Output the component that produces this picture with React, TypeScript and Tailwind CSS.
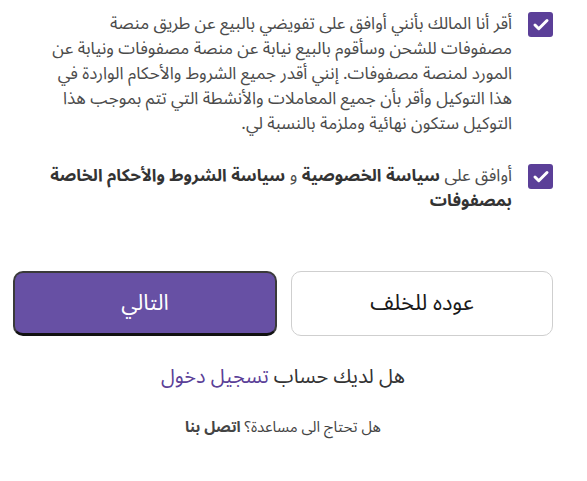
import { Check } from 'lucide-react'

function Box() {
  return (
    <span className="flex h-[25px] w-[25px] shrink-0 items-center justify-center rounded-[3px] bg-[#5b3f98]">
      <Check className="h-[18px] w-[18px] text-white" strokeWidth={4} />
    </span>
  )
}

export default function App() {
  return (
    <div
      dir="rtl"
      className="min-h-screen bg-white pr-[34px] pl-[13px] pt-[12px] text-[#4b4b4b]"
      style={{ fontFamily: '"Noto Sans Arabic", "DejaVu Sans", "Noto Sans", sans-serif' }}
    >
      <div className="flex items-start gap-[16px]">
        <Box />
        <p className="text-[17px] leading-[25px]">
          أقر أنا المالك بأنني أوافق على تفويضي بالبيع عن طريق منصة
          <br />
          مصفوفات للشحن وسأقوم بالبيع نيابة عن منصة مصفوفات ونيابة عن
          <br />
          المورد لمنصة مصفوفات. إنني أقدر جميع الشروط والأحكام الواردة في
          <br />
          هذا التوكيل وأقر بأن جميع المعاملات والأنشطة التي تتم بموجب هذا
          <br />
          التوكيل ستكون نهائية وملزمة بالنسبة لي.
        </p>
      </div>

      <div className="mt-[27px] flex items-start gap-[16px]">
        <Box />
        <p className="text-[17px] leading-[25px]">
          أوافق على <b className="text-[#333]">سياسة الخصوصية</b> و{' '}
          <b className="text-[#333]">سياسة الشروط والأحكام الخاصة بمصفوفات</b>
        </p>
      </div>

      <div className="mt-[57px] flex gap-[14px]">
        <button className="h-[65px] flex-1 rounded-[10px] border border-[#cfcfcf] bg-white text-[22px] text-[#1a1a1a]">
          عوده للخلف
        </button>
        <button className="h-[65px] flex-1 rounded-[10px] border-2 border-[#3a3a3a] border-b-[3px] border-b-[#111] bg-[#6750a4] text-[22px] text-white">
          التالي
        </button>
      </div>

      <p className="mt-[26px] text-center text-[20px] text-[#333]">
        هل لديك حساب <span className="text-[#5b3f98]">تسجيل دخول</span>
      </p>

      <p className="mt-[24px] text-center text-[15px] text-[#444]">
        هل تحتاج الى مساعدة؟ <b>اتصل بنا</b>
      </p>
    </div>
  )
}
